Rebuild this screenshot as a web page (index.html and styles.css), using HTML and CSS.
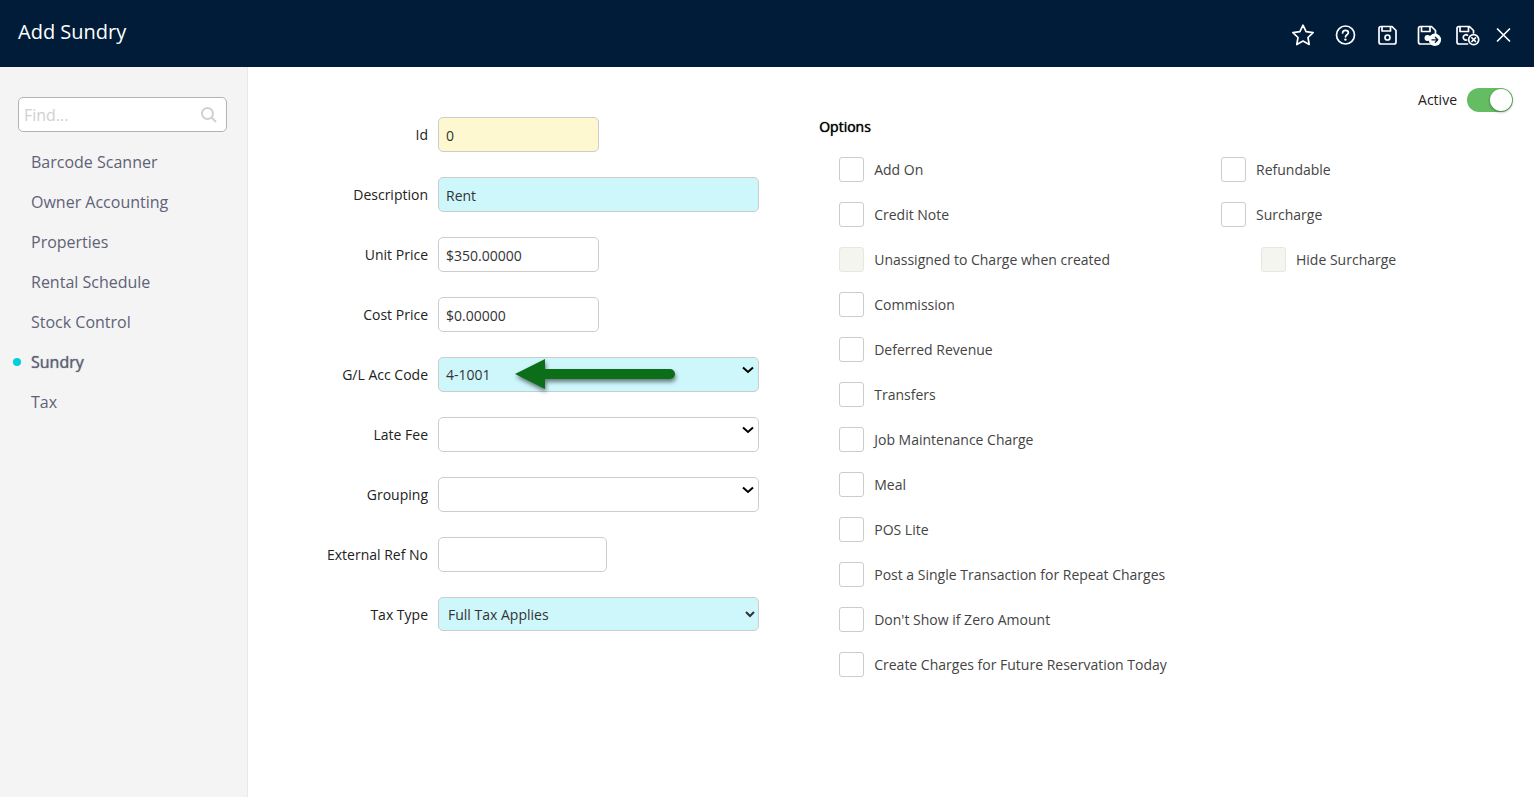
FILE: index.html
```html
<!DOCTYPE html>
<html lang="en">
<head>
    <meta charset="UTF-8">
    <title>Add Sundry</title>
    <link rel="stylesheet" href="styles.css">
</head>
<body>
    <header class="header">
        <h1>Add Sundry</h1>
        <div class="toolbar">
            <button type="button" aria-label="Favourite">
                <svg width="28" height="28" viewBox="0 0 28 28"><path d="M15 4.2l3.1 6.4 7 1-5.1 4.9 1.2 7-6.2-3.4-6.2 3.4 1.2-7-5.1-4.9 7-1z"/></svg>
            </button>
            <button type="button" aria-label="Help">
                <svg width="28" height="28" viewBox="0 0 28 28"><circle cx="15.5" cy="14" r="9"/><path d="M12.6 12c0-1.6 1.3-2.7 2.9-2.7s2.9 1 2.9 2.5c0 1.9-2.7 2-2.9 4"/><circle class="solid" cx="15.4" cy="18.6" r="1.2"/></svg>
            </button>
            <button type="button" aria-label="Save">
                <svg width="28" height="28" viewBox="0 0 28 28"><path d="M9 5.500h11l4 4v11.500a2 2 0 0 1-2 2H9a2 2 0 0 1-2-2V7.500a2 2 0 0 1 2-2zM10 5.500v4.500h8.500v-4.500"/><circle cx="15.500" cy="16.500" r="2.500"/></svg>
            </button>
            <button type="button" aria-label="Save and next">
                <svg width="28" height="28" viewBox="0 0 28 28"><path d="M16 23H6.500a2 2 0 0 1-2-2V7.500a2 2 0 0 1 2-2H17.500l4 4v4M7.500 6v4.500h8.500v-4.500"/><circle class="solid" cx="13.500" cy="17" r="3"/><circle class="disc" cx="20.900" cy="18.800" r="6.200"/><path class="mark" d="M17.900 18.800h5.600M21.300 16.300l2.500 2.500-2.500 2.500"/></svg>
            </button>
            <button type="button" aria-label="Save and close">
                <svg width="24" height="28" viewBox="0 0 24 28"><path d="M11.500 23H3a2 2 0 0 1-2-2V7.500a2 2 0 0 1 2-2H13.500l4 4v2.500M4 6v4.500h8.500v-4.500M11.500 14.200a2.700 2.700 0 1 0-.8 4.800"/><circle cx="17.700" cy="18.700" r="5"/><path d="M15.900 16.900l3.600 3.600M19.500 16.900l-3.600 3.600"/></svg>
            </button>
            <button type="button" aria-label="Close">
                <svg width="20" height="28" viewBox="0 0 20 28"><path d="M3.500 8l12 12M15.500 8l-12 12"/></svg>
            </button>
        </div>
    </header>

    <div class="page">
        <aside class="sidebar">
            <div class="search">
                <input type="text" placeholder="Find..." aria-label="Find">
                <svg width="16" height="16" viewBox="0 0 16 16"><circle cx="6.500" cy="6.500" r="5.500"/><path d="M10.500 10.500l4.500 4.500"/></svg>
            </div>
            <nav>
                <a href="#">Barcode Scanner</a>
                <a href="#">Owner Accounting</a>
                <a href="#">Properties</a>
                <a href="#">Rental Schedule</a>
                <a href="#">Stock Control</a>
                <a href="#" class="current">Sundry</a>
                <a href="#">Tax</a>
            </nav>
        </aside>

        <main class="content">
            <div class="status">
                <label for="active">Active</label>
                <input type="checkbox" id="active" class="toggle" checked>
            </div>

            <form class="columns">
                <div class="fields">
                    <label for="id">Id</label>
                    <input type="text" id="id" class="short readonly" value="0" readonly>

                    <label for="description">Description</label>
                    <input type="text" id="description" class="required" value="Rent">

                    <label for="unit-price">Unit Price</label>
                    <input type="text" id="unit-price" class="short" value="$350.00000">

                    <label for="cost-price">Cost Price</label>
                    <input type="text" id="cost-price" class="short" value="$0.00000">

                    <label for="gl-code">G/L Acc Code</label>
                    <div class="combo">
                        <select id="gl-code" class="required"><option>4-1001</option></select>
                        <svg class="chevron" width="12" height="8" viewBox="0 0 12 8"><path d="M1 1.500l5 4.500 5-4.500"/></svg>
                        <!-- arrow pointing at the account code -->
                        <svg class="pointer" width="170" height="40" viewBox="0 0 170 40"><path d="M0 16L30 1v10h125a5 5 0 0 1 0 10H30v10z"/></svg>
                    </div>

                    <label for="late-fee">Late Fee</label>
                    <div class="combo">
                        <select id="late-fee"><option></option></select>
                        <svg class="chevron" width="12" height="8" viewBox="0 0 12 8"><path d="M1 1.500l5 4.500 5-4.500"/></svg>
                    </div>

                    <label for="grouping">Grouping</label>
                    <div class="combo">
                        <select id="grouping"><option></option></select>
                        <svg class="chevron" width="12" height="8" viewBox="0 0 12 8"><path d="M1 1.500l5 4.500 5-4.500"/></svg>
                    </div>

                    <label for="external-ref">External Ref No</label>
                    <input type="text" id="external-ref" class="medium">

                    <label for="tax-type">Tax Type</label>
                    <select id="tax-type" class="native required"><option>Full Tax Applies</option></select>
                </div>

                <section class="options">
                    <h2>Options</h2>
                    <div class="option-columns">
                        <div class="option-list">
                            <label><input type="checkbox">Add On</label>
                            <label><input type="checkbox">Credit Note</label>
                            <label><input type="checkbox" disabled>Unassigned to Charge when created</label>
                            <label><input type="checkbox">Commission</label>
                            <label><input type="checkbox">Deferred Revenue</label>
                            <label><input type="checkbox">Transfers</label>
                            <label><input type="checkbox">Job Maintenance Charge</label>
                            <label><input type="checkbox">Meal</label>
                            <label><input type="checkbox">POS Lite</label>
                            <label><input type="checkbox">Post a Single Transaction for Repeat Charges</label>
                            <label><input type="checkbox">Don't Show if Zero Amount</label>
                            <label><input type="checkbox">Create Charges for Future Reservation Today</label>
                        </div>
                        <div class="option-list">
                            <label><input type="checkbox">Refundable</label>
                            <label><input type="checkbox">Surcharge</label>
                            <label class="child"><input type="checkbox" disabled>Hide Surcharge</label>
                        </div>
                    </div>
                </section>
            </form>
        </main>
    </div>
</body>
</html>
```

FILE: styles.css
```css
* {
    box-sizing: border-box;
}
body {
    margin: 0;
    min-height: 100vh;
    display: flex;
    flex-direction: column;
    font-family: "Open Sans", sans-serif;
    font-size: 14px;
    line-height: 20px;
    color: #222;
    background-color: #fff;
}

/* Header */
.header {
    display: flex;
    justify-content: space-between;
    align-items: flex-start;
    padding: 18px 20px 18px 18px;
    background-color: #001c38;
    color: #fff;
}
.header h1 {
    margin: 0;
    font-size: 20px;
    font-weight: 500;
    line-height: 28px;
}
.toolbar {
    display: flex;
    gap: 14px;
    padding-top: 3px;
}
.toolbar button {
    display: flex;
    padding: 0;
    border: none;
    background: none;
    cursor: pointer;
}
.toolbar svg {
    fill: none;
    stroke: #fff;
    stroke-width: 1.7;
    stroke-linejoin: round;
    stroke-linecap: round;
}
.toolbar .solid {
    fill: #fff;
    stroke: none;
}
.toolbar .disc {
    fill: #fff;
    stroke: none;
}
.toolbar .mark {
    stroke: #001c38;
    stroke-width: 1.3;
}

.page {
    flex: 1;
    display: flex;
}

/* Sidebar */
.sidebar {
    flex: none;
    width: 248px;
    padding: 30px 20px 20px 13px;
    background-color: #f4f4f4;
    border-right: 1px solid #e8e8e8;
}
.search {
    display: flex;
    align-items: center;
    height: 35px;
    margin: 0 0 10px 5px;
    padding: 0 9px 0 5px;
    border: 1px solid #b3b3b3;
    border-radius: 5px;
    background-color: #fff;
}
.search input {
    flex: 1;
    min-width: 0;
    padding: 0;
    border: none;
    outline: none;
    background: none;
    font-family: inherit;
    font-size: 16px;
}
.search input::placeholder {
    color: #d0d0d0;
}
.search svg {
    fill: none;
    stroke: #d0d0d0;
    stroke-width: 2;
}
.sidebar a {
    display: flex;
    align-items: center;
    height: 40px;
    font-size: 16px;
    color: #5f6277;
    text-decoration: none;
}
.sidebar a::before {
    content: "";
    width: 8px;
    height: 8px;
    margin-right: 10px;
    border-radius: 50%;
}
.sidebar a.current {
    text-shadow: 0 0 1px #5f6277;
}
.sidebar a.current::before {
    background-color: #00cfdd;
}

/* Content */
.content {
    flex: 1;
    min-width: 0;
    padding: 21px 21px 20px 0;
}
.status {
    display: flex;
    justify-content: flex-end;
    align-items: center;
    gap: 10px;
    margin-bottom: 5px;
}
.toggle {
    appearance: none;
    width: 46px;
    height: 24px;
    margin: 0;
    padding: 1px;
    border-radius: 12px;
    background-color: #ccc;
}
.toggle::before {
    content: "";
    display: block;
    width: 22px;
    height: 22px;
    border-radius: 50%;
    background-color: #fff;
    box-shadow: 0 1px 3px rgba(0, 0, 0, 0.4);
}
.toggle:checked {
    background-color: #64bd63;
}
.toggle:checked::before {
    margin-left: auto;
}
.columns {
    display: grid;
    grid-template-columns: 14fr 19fr;
    gap: 60px;
}

/* Fields */
.fields {
    display: grid;
    grid-template-columns: 180px 1fr;
    grid-auto-rows: 35px;
    gap: 25px 10px;
    align-items: center;
    align-content: start;
}
.fields > label {
    text-align: right;
}
.fields input,
.fields select {
    width: 100%;
    height: 35px;
    margin: 0;
    padding: 2px 7px 0;
    border: 1px solid #ccc;
    border-radius: 5px;
    background-color: #fff;
    color: #333;
    font-family: inherit;
    font-size: 14px;
}
.fields .short {
    width: 161px;
}
.fields .medium {
    width: 169px;
}
.fields .readonly {
    background-color: #fdf8cf;
}
.fields .required {
    background-color: #cef7fc;
}
.combo {
    position: relative;
}
.fields .combo select {
    display: block;
    padding-top: 0;
    appearance: none;
}
.fields .native {
    height: 34px;
    padding: 0 5px;
    align-self: start;
}
.chevron {
    position: absolute;
    top: 9px;
    right: 5px;
    fill: none;
    stroke: #000;
    stroke-width: 2;
    pointer-events: none;
}
.pointer {
    position: absolute;
    top: 1px;
    left: 77px;
    fill: #0c6e19;
    filter: drop-shadow(1px 3px 2px rgba(0, 0, 0, 0.5));
    pointer-events: none;
}

/* Options */
.options h2 {
    margin: 0 0 20px;
    font-size: 14px;
    font-weight: 400;
    line-height: 20px;
    color: #000;
    text-shadow: 0 0 1px #000;
}
.option-columns {
    display: grid;
    grid-template-columns: 17fr 13fr;
    padding-left: 20px;
}
.option-list {
    display: flex;
    flex-direction: column;
    gap: 20px;
}
.option-list label {
    display: flex;
    align-items: center;
    gap: 10px;
    color: #444;
}
.option-list .child {
    padding-left: 40px;
}
.option-list input {
    appearance: none;
    flex: none;
    width: 25px;
    height: 25px;
    margin: 0;
    border: 1px solid #ccc;
    border-radius: 3px;
    background-color: #fff;
}
.option-list input:checked {
    background-color: #64bd63;
}
.option-list input:disabled {
    border-color: #e6e6e3;
    background-color: #f5f5f0;
}
```
